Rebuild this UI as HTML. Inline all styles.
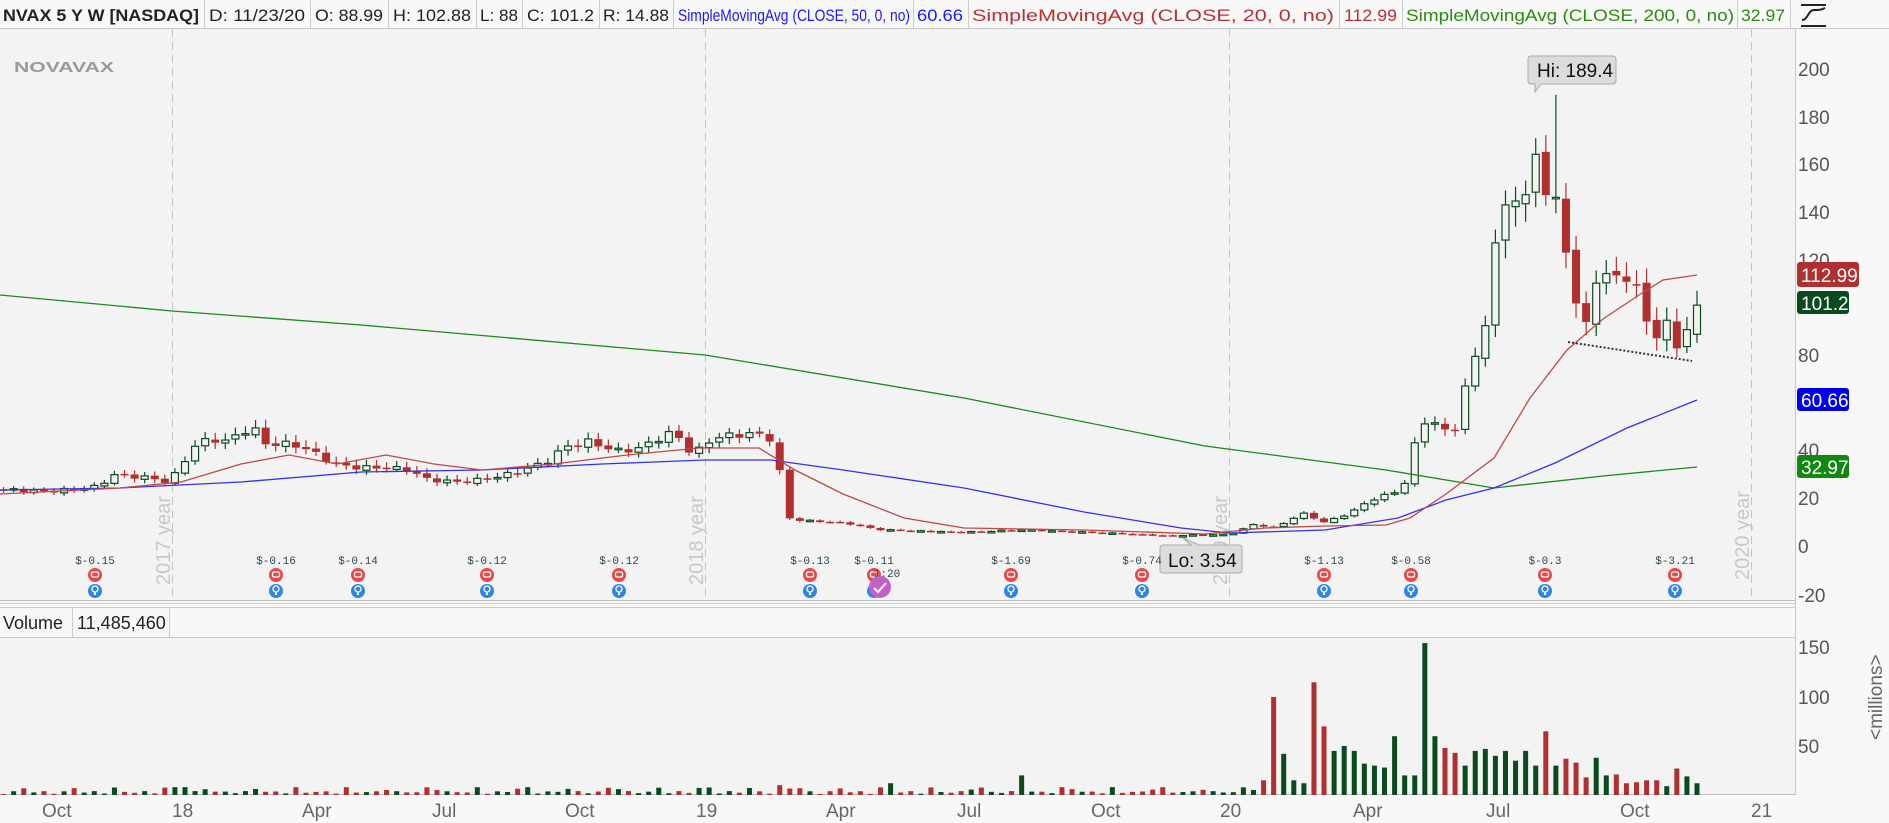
<!DOCTYPE html>
<html><head><meta charset="utf-8"><style>
html,body{margin:0;padding:0;background:#f7f7f7;overflow:hidden}
svg{display:block;font-family:"Liberation Sans",sans-serif}
</style></head><body>
<svg id="s" width="1889" height="823" xmlns="http://www.w3.org/2000/svg">
<rect width="1889" height="823" fill="#f8f8f8"/>
<rect x="0" y="29" width="1795" height="571" fill="#f3f3f3"/>
<rect x="0" y="637" width="1795" height="158" fill="#f3f3f3"/>
<rect x="0" y="608" width="1795" height="29" fill="#f7f7f7"/>
<line x1="0" y1="28.5" x2="1889" y2="28.5" stroke="#c8c8c8"/>
<line x1="1795.5" y1="29" x2="1795.5" y2="795" stroke="#c8c8c8"/>
<line x1="0" y1="600.5" x2="1795" y2="600.5" stroke="#c0c0c0"/>
<line x1="0" y1="603.5" x2="1795" y2="603.5" stroke="#d0d0d0"/>
<line x1="0" y1="607.5" x2="1795" y2="607.5" stroke="#c8c8c8"/>
<line x1="0" y1="637.5" x2="1795" y2="637.5" stroke="#c8c8c8"/>
<line x1="0" y1="794.5" x2="1795" y2="794.5" stroke="#c0c0c0"/>
<!-- header -->
<g font-size="17" fill="#222">
<text x="3" y="21" font-weight="bold" textLength="196" lengthAdjust="spacingAndGlyphs">NVAX 5 Y W [NASDAQ]</text>
<line x1="204.5" y1="0" x2="204.5" y2="28" stroke="#ccc"/>
<text x="209" y="21" textLength="96" lengthAdjust="spacingAndGlyphs">D: 11/23/20</text>
<line x1="310.5" y1="0" x2="310.5" y2="28" stroke="#ccc"/>
<text x="315" y="21" textLength="68" lengthAdjust="spacingAndGlyphs">O: 88.99</text>
<line x1="388.5" y1="0" x2="388.5" y2="28" stroke="#ccc"/>
<text x="393" y="21" textLength="78" lengthAdjust="spacingAndGlyphs">H: 102.88</text>
<line x1="476.5" y1="0" x2="476.5" y2="28" stroke="#ccc"/>
<text x="480" y="21" textLength="38" lengthAdjust="spacingAndGlyphs">L: 88</text>
<line x1="522.5" y1="0" x2="522.5" y2="28" stroke="#ccc"/>
<text x="527" y="21" textLength="67" lengthAdjust="spacingAndGlyphs">C: 101.2</text>
<line x1="599.5" y1="0" x2="599.5" y2="28" stroke="#ccc"/>
<text x="603" y="21" textLength="66" lengthAdjust="spacingAndGlyphs">R: 14.88</text>
<line x1="673.5" y1="0" x2="673.5" y2="28" stroke="#ccc"/>
<text x="678" y="21" fill="#1a1aff" textLength="232" lengthAdjust="spacingAndGlyphs">SimpleMovingAvg (CLOSE, 50, 0, no)</text>
<line x1="913.5" y1="0" x2="913.5" y2="28" stroke="#ccc"/>
<text x="917" y="21" fill="#1a1aff" textLength="46" lengthAdjust="spacingAndGlyphs">60.66</text>
<line x1="968.5" y1="0" x2="968.5" y2="28" stroke="#ccc"/>
<text x="972" y="21" fill="#b83232" textLength="362" lengthAdjust="spacingAndGlyphs">SimpleMovingAvg (CLOSE, 20, 0, no)</text>
<line x1="1339.5" y1="0" x2="1339.5" y2="28" stroke="#ccc"/>
<text x="1344" y="21" fill="#b83232" textLength="53" lengthAdjust="spacingAndGlyphs">112.99</text>
<line x1="1402.5" y1="0" x2="1402.5" y2="28" stroke="#ccc"/>
<text x="1406" y="21" fill="#2a8a12" textLength="328" lengthAdjust="spacingAndGlyphs">SimpleMovingAvg (CLOSE, 200, 0, no)</text>
<line x1="1737.5" y1="0" x2="1737.5" y2="28" stroke="#ccc"/>
<text x="1741" y="21" fill="#2a8a12" textLength="44" lengthAdjust="spacingAndGlyphs">32.97</text>
<line x1="1790.5" y1="0" x2="1790.5" y2="28" stroke="#ccc"/>
</g>
<g stroke="#222" stroke-width="2" fill="none">
<line x1="1801" y1="5" x2="1826" y2="5"/><line x1="1801" y1="26" x2="1826" y2="26"/>
<path d="M1802 20 C1808 20 1808 10 1814 10 C1820 10 1820 10 1825 8" />
</g>
<text x="14" y="72" font-size="15" font-weight="bold" fill="#9a9a9a" textLength="100" lengthAdjust="spacingAndGlyphs">NOVAVAX</text>
<!-- dashed year lines -->
<g stroke="#c4c4c4" stroke-dasharray="8,5" stroke-width="1">
<line x1="172.5" y1="29" x2="172.5" y2="600"/><line x1="705.5" y1="29" x2="705.5" y2="600"/>
<line x1="1229.5" y1="29" x2="1229.5" y2="600"/><line x1="1751.5" y1="29" x2="1751.5" y2="600"/>
</g>
<g font-size="20" fill="#c8c8c8">
<text transform="translate(170,585) rotate(-90)">2017 year</text>
<text transform="translate(703,585) rotate(-90)">2018 year</text>
<text transform="translate(1227,585) rotate(-90)">2019 year</text>
<text transform="translate(1749,580) rotate(-90)">2020 year</text>
</g>
<!-- right axis -->
<g font-size="19" fill="#555">
<text x="1798" y="76">200</text><text x="1798" y="124">180</text><text x="1798" y="171">160</text>
<text x="1798" y="219">140</text><text x="1798" y="267">120</text><text x="1798" y="362">80</text>
<text x="1798" y="457">40</text><text x="1798" y="505">20</text><text x="1798" y="553">0</text>
<text x="1798" y="602">-20</text>
<text x="1798" y="654">150</text><text x="1798" y="704">100</text><text x="1798" y="753">50</text>
<text transform="translate(1882,740) rotate(-90)" fill="#666">&lt;millions&gt;</text>
</g>
<g font-size="19" fill="#fff">
<rect x="1797" y="262" width="62" height="25" rx="3" fill="#b03030"/><text x="1801" y="282">112.99</text>
<rect x="1797" y="291" width="52" height="23" rx="3" fill="#0a4a1e"/><text x="1801" y="310">101.2</text>
<rect x="1797" y="388" width="52" height="23" rx="3" fill="#0000ee"/><text x="1801" y="407">60.66</text>
<rect x="1797" y="455" width="52" height="23" rx="3" fill="#118811"/><text x="1801" y="474">32.97</text>
</g>
<!-- x axis -->
<g font-size="19" fill="#666">
<text x="42" y="817">Oct</text><text x="172" y="817">18</text><text x="302" y="817">Apr</text>
<text x="432" y="817">Jul</text><text x="565" y="817">Oct</text><text x="696" y="817">19</text>
<text x="826" y="817">Apr</text><text x="957" y="817">Jul</text><text x="1091" y="817">Oct</text>
<text x="1220" y="817">20</text><text x="1353" y="817">Apr</text><text x="1486" y="817">Jul</text>
<text x="1620" y="817">Oct</text><text x="1751" y="817">21</text>
</g>
<g font-size="18" fill="#222">
<text x="3" y="629">Volume</text><line x1="72.5" y1="608" x2="72.5" y2="637" stroke="#ccc"/>
<text x="77" y="629">11,485,460</text><line x1="169.5" y1="608" x2="169.5" y2="637" stroke="#ccc"/>
</g>
<g id="cnd"></g>
<g id="ma" fill="none" stroke-width="1.3">
<polyline stroke="#1a8a1a" points="0,295 172,311 361,325 705,355 964,398 1205,446 1386,470 1494,488 1603,476 1697,467"/>
<polyline stroke="#3333ee" points="0,490 120,488 241,482 361,472 482,470 602,464 705,460 771,460 843,470 964,488 1084,512 1181,528 1229,533 1325,530 1398,518 1446,500 1494,488 1555,463 1627,428 1697,400"/>
<polyline stroke="#c04848" points="0,494 120,488 181,482 241,464 289,455 337,464 386,455 434,464 482,470 554,464 627,455 699,448 759,448 795,470 843,494 904,518 964,528 1084,530 1205,534 1265,528 1325,526 1386,525 1410,518 1446,494 1494,458 1530,398 1567,350 1603,319 1639,295 1663,280 1697,275"/>
</g>
<line x1="1568" y1="342" x2="1692" y2="361" stroke="#333" stroke-width="2" stroke-dasharray="2,2"/>
<!-- Hi / Lo labels -->
<path d="M1531 56 h82 a3 3 0 0 1 3 3 v22 a3 3 0 0 1 -3 3 h-72 l-6 8 l0 -8 h-4 a3 3 0 0 1 -3 -3 v-22 a3 3 0 0 1 3 -3z" fill="#dcdcdc" stroke="#aaa"/>
<text x="1537" y="77" font-size="19" fill="#111">Hi: 189.4</text>
<path d="M1163 545 h28 l-8 -7 l16 7 h40 a3 3 0 0 1 3 3 v22 a3 3 0 0 1 -3 3 h-76 a3 3 0 0 1 -3 -3 v-22 a3 3 0 0 1 3 -3z" fill="#dcdcdc" stroke="#aaa"/>
<text x="1168" y="567" font-size="19" fill="#111">Lo: 3.54</text>
<g id="earn" font-family="Liberation Mono,monospace" font-size="11"></g>
</svg>
<script>
var NS="http://www.w3.org/2000/svg";
function el(t,a,p){var e=document.createElementNS(NS,t);for(var k in a)e.setAttribute(k,a[k]);(p||document.getElementById('cnd')).appendChild(e);return e;}
var kp=[[0,24],[40,23],[80,25],[95,30],[120,29],[140,27],[150,33],[160,42],[175,45],[190,44],[200,48],[210,50],[220,43],[235,43],[250,42],[265,38],[280,34],[300,33],[320,33],[340,32],[355,28],[380,27],[400,28],[420,30],[440,33],[455,36],[470,42],[490,44],[510,40],[530,41],[545,45],[560,48],[575,38],[590,45],[610,47],[630,47],[645,44],[650,13],[660,11],[700,10],[730,7],[760,6.5],[800,6],[850,7],[900,6],[950,5],[970,4.5],[1000,5],[1020,5],[1040,9],[1060,8],[1080,14],[1100,10],[1120,14],[1140,20],[1160,23],[1170,30],[1175,45],[1185,55],[1195,50],[1205,45],[1215,65],[1225,80],[1235,100],[1245,140],[1255,150],[1265,140],[1275,170],[1280,148],[1290,145],[1297,135],[1305,110],[1310,93],[1315,88],[1320,110],[1327,115],[1335,110],[1345,118],[1350,112],[1357,108],[1365,100],[1372,85],[1380,90],[1385,95],[1392,85],[1400,89],[1408,101.2]];
function px(xd){for(var i=1;i<kp.length;i++){if(xd<=kp[i][0]){var a=kp[i-1],b=kp[i];return a[1]+(b[1]-a[1])*(xd-a[0])/(b[0]-a[0]);}}return kp[kp.length-1][1];}
function Y(p){return 546.5-p*2.385;}
var N=169,prev=24;
var vols=[100,42,15,12,115,70,45,50,45,32,30,28,60,20,20,155,60,48,43,30,45,47,40,45,35,45,30,65,30,37,33,18,38,20,21,12,13,15,15,9,27,19,12];
for(var i=0;i<N;i++){
 var x=1697-(N-1-i)*10.08, xd=x/1.205;
 var c=px(xd)*(1+0.03*Math.sin(i*2.3));
 if(i==N-1)c=101.2;
 var o=(i==N-1)?88.99:prev*(1+0.01*Math.sin(i*1.7));
 var hi=Math.max(o,c)*(1+0.04+0.03*Math.abs(Math.sin(i*3.1))), lo=Math.min(o,c)*(1-0.03-0.03*Math.abs(Math.cos(i*2.7)));
 if(i==N-15){hi=189.4;}
 var up=c>=o, col=up?"#0a4a1e":"#b03030";
 el('line',{x1:x,y1:Y(hi),x2:x,y2:Y(lo),stroke:col,'stroke-width':1.2});
 var t=Y(Math.max(o,c)),b=Y(Math.min(o,c)); if(b-t<1.5)b=t+1.5;
 if(up)el('rect',{x:x-3.5,y:t,width:7,height:b-t,fill:"#f3f3f3",stroke:col,'stroke-width':1.2});
 else el('rect',{x:x-4,y:t,width:8,height:b-t,fill:col});
 var v, k=N-1-i;
 if(k<vols.length) v=vols[vols.length-1-k];
 else v=1+3*Math.abs(Math.sin(i*1.9))+(Math.abs(Math.sin(i*0.7))>0.9?4:0);
 if(k==vols.length+0) v=15; if(Math.abs(xd-848)<5)v=20; if(Math.abs(xd-650)<5)v=10;if(Math.abs(xd-740)<5)v=12;if(Math.abs(xd-150)<5)v=8;
 el('rect',{x:x-2.5,y:795-v*0.98,width:5,height:v*0.98,fill:col});
 prev=c;
}
var ern=[[95,"$-0.15"],[276,"$-0.16"],[358,"$-0.14"],[487,"$-0.12"],[619,"$-0.12"],[810,"$-0.13"],[874,"$-0.11"],[1011,"$-1.69"],[1142,"$-0.74"],[1324,"$-1.13"],[1411,"$-0.58"],[1545,"$-0.3"],[1675,"$-3.21"]];
var g=document.getElementById('earn');
ern.forEach(function(e){
 var t=el('text',{x:e[0],y:564,'text-anchor':'middle',fill:'#2a4a4a'},g);t.textContent=e[1];
 el('circle',{cx:e[0],cy:575,r:7,fill:'#e84848'},g);
 el('rect',{x:e[0]-3.5,y:572,width:7,height:5,rx:1.5,fill:'none',stroke:'#fff','stroke-width':1.3},g);
 el('circle',{cx:e[0],cy:591,r:7,fill:'#2d86e8'},g);
 el('circle',{cx:e[0],cy:589,r:3,fill:'none',stroke:'#fff','stroke-width':1.3},g);
 el('line',{x1:e[0],y1:592,x2:e[0],y2:595,stroke:'#fff','stroke-width':2},g);
});
var t2=el('text',{x:887,y:577,'text-anchor':'middle',fill:'#2a4a4a'},g);t2.textContent="1:20";
el('circle',{cx:880,cy:587,r:11,fill:'#c060c8'},g);
el('path',{d:"M874 588 l4 4 l8 -9",stroke:'#fff','stroke-width':2,fill:'none'},g);
</script>
</body></html>
